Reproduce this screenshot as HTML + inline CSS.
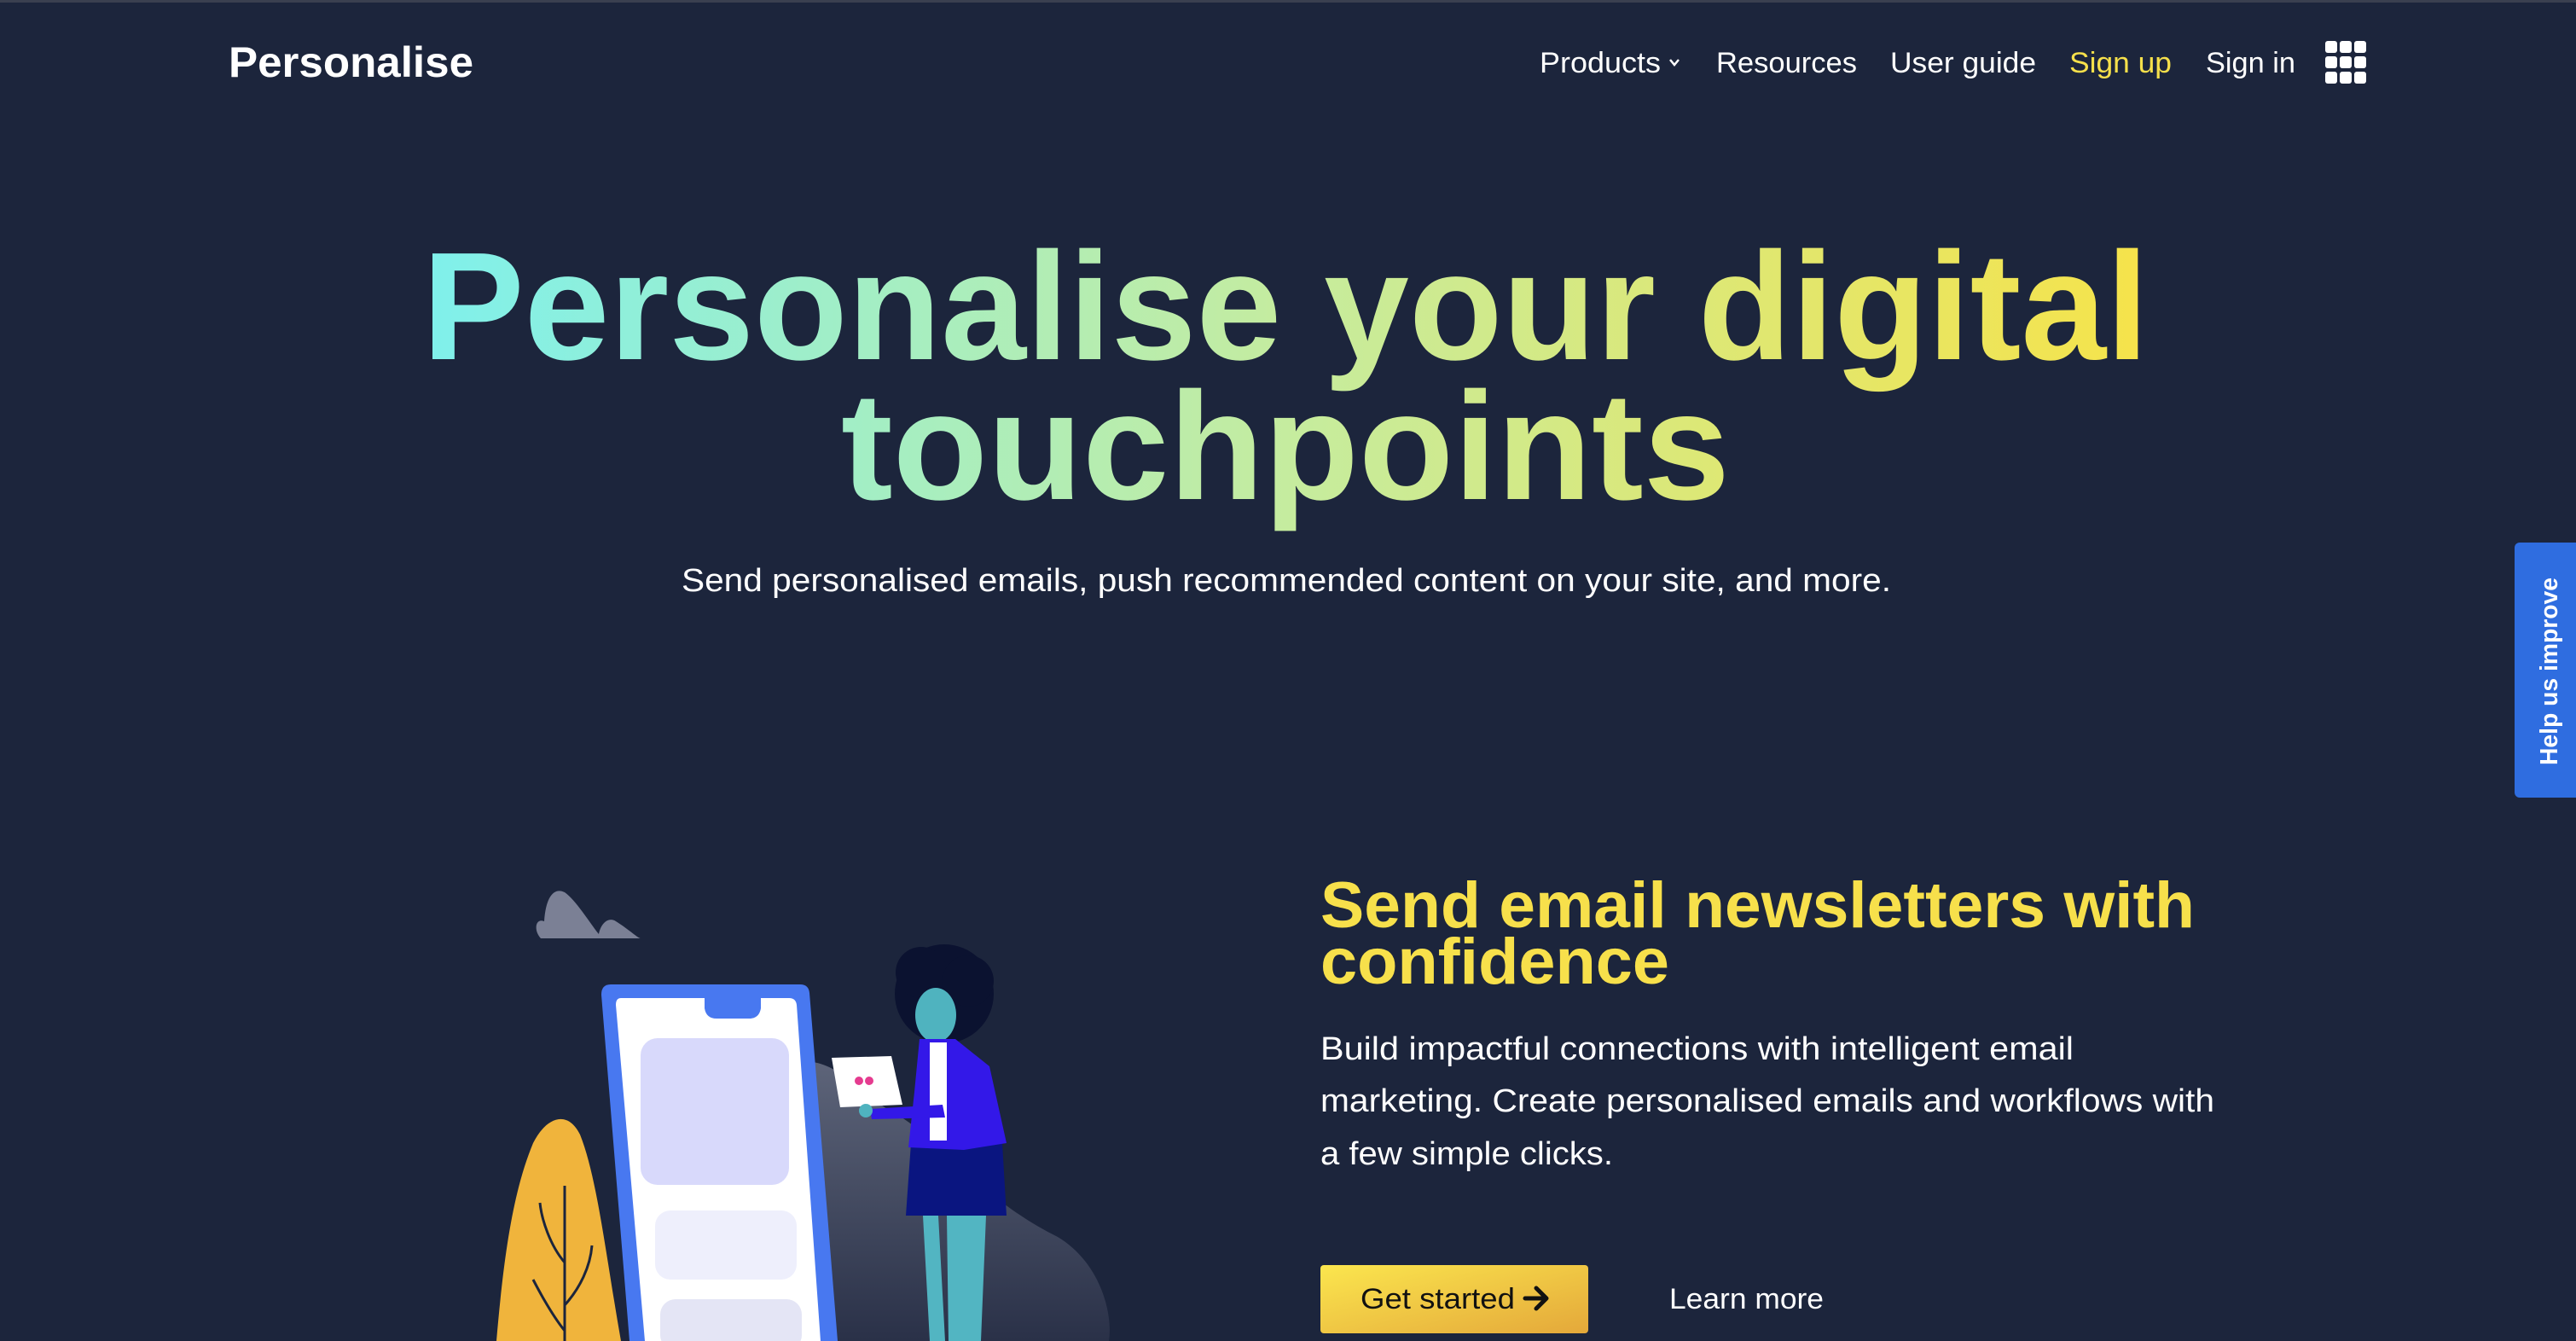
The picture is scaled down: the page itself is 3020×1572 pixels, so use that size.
<!DOCTYPE html>
<html><head><meta charset="utf-8"><style>
html,body{margin:0;padding:0;background:#1c253c;}
body{width:3020px;height:1572px;overflow:hidden;position:relative;font-family:"Liberation Sans",sans-serif;}
svg{position:absolute;left:0;top:0}
</style></head><body>
<svg width="3020" height="1572" viewBox="0 0 3020 1572" xmlns="http://www.w3.org/2000/svg" font-family="Liberation Sans, sans-serif">
<defs>
<linearGradient id="hg" x1="495" y1="0" x2="2519" y2="0" gradientUnits="userSpaceOnUse">
<stop offset="0" stop-color="#7ff0ec"/><stop offset="0.5" stop-color="#c5ec9f"/><stop offset="1" stop-color="#f6e34a"/></linearGradient>
<linearGradient id="bg" x1="0" y1="0" x2="1" y2="1"><stop offset="0" stop-color="#fbe64e"/><stop offset="1" stop-color="#e4a83a"/></linearGradient>
<linearGradient id="hill" x1="0" y1="0" x2="0" y2="1"><stop offset="0" stop-color="#5d6479"/><stop offset="1" stop-color="#2a3148"/></linearGradient>
</defs>
<rect width="3020" height="1572" fill="#1c253c"/>
<rect width="3020" height="3" fill="#3a4050"/>
<!-- logo -->
<text x="268" y="90" font-size="50" font-weight="bold" fill="#fff" textLength="287" lengthAdjust="spacingAndGlyphs">Personalise</text>
<!-- nav -->
<g font-size="34" fill="#fff">
<text x="1805" y="85" textLength="142" lengthAdjust="spacingAndGlyphs">Products</text>
<path d="M1958 70 l5 6 l5 -6" stroke="#fff" stroke-width="2.5" fill="none"/>
<text x="2012" y="85" textLength="165" lengthAdjust="spacingAndGlyphs">Resources</text>
<text x="2216" y="85" textLength="171" lengthAdjust="spacingAndGlyphs">User guide</text>
<text x="2426" y="85" fill="#f6e04b" textLength="120" lengthAdjust="spacingAndGlyphs">Sign up</text>
<text x="2586" y="85" textLength="105" lengthAdjust="spacingAndGlyphs">Sign in</text>
</g>
<g fill="#fff">
<rect x="2726" y="48" width="14" height="14" rx="3"/><rect x="2743" y="48" width="14" height="14" rx="3"/><rect x="2760" y="48" width="14" height="14" rx="3"/>
<rect x="2726" y="66" width="14" height="14" rx="3"/><rect x="2743" y="66" width="14" height="14" rx="3"/><rect x="2760" y="66" width="14" height="14" rx="3"/>
<rect x="2726" y="84" width="14" height="14" rx="3"/><rect x="2743" y="84" width="14" height="14" rx="3"/><rect x="2760" y="84" width="14" height="14" rx="3"/>
</g>
<!-- hero -->
<g font-size="180" font-weight="bold" fill="url(#hg)">
<text x="495" y="421" textLength="2024" lengthAdjust="spacingAndGlyphs">Personalise your digital</text>
<text x="986" y="585" textLength="1042" lengthAdjust="spacingAndGlyphs">touchpoints</text>
</g>
<text x="799" y="693" font-size="38" fill="#fff" textLength="1418" lengthAdjust="spacingAndGlyphs">Send personalised emails, push recommended content on your site, and more.</text>
<!-- section -->
<g font-size="76" font-weight="bold" fill="#f7e04b">
<text x="1548" y="1087" textLength="1025" lengthAdjust="spacingAndGlyphs">Send email newsletters with</text>
<text x="1548" y="1153" textLength="409" lengthAdjust="spacingAndGlyphs">confidence</text>
</g>
<g font-size="38" fill="#fff">
<text x="1548" y="1242" textLength="883" lengthAdjust="spacingAndGlyphs">Build impactful connections with intelligent email</text>
<text x="1548" y="1303" textLength="1048" lengthAdjust="spacingAndGlyphs">marketing. Create personalised emails and workflows with</text>
<text x="1548" y="1365" textLength="343" lengthAdjust="spacingAndGlyphs">a few simple clicks.</text>
</g>
<rect x="1548" y="1483" width="314" height="80" rx="4" fill="url(#bg)"/>
<text x="1595" y="1534" font-size="34" fill="#111" textLength="181" lengthAdjust="spacingAndGlyphs">Get started</text>
<path d="M1788 1522 h24 M1801 1510 l12 12 l-12 12" stroke="#111" stroke-width="5" fill="none" stroke-linecap="round" stroke-linejoin="round"/>
<text x="1957" y="1534" font-size="34" fill="#fff" textLength="181" lengthAdjust="spacingAndGlyphs">Learn more</text>
<!-- help tab -->
<rect x="2948" y="636" width="90" height="299" rx="6" fill="#2f6de0"/>
<text transform="translate(2998 897) rotate(-90)" font-size="29" font-weight="bold" fill="#fff" textLength="220" lengthAdjust="spacingAndGlyphs">Help us improve</text>
<!-- illustration -->
<path d="M634 1100 C625 1090 628 1076 638 1080 C640 1050 650 1040 662 1046 C675 1055 690 1080 702 1095 C705 1080 715 1075 722 1080 C738 1090 748 1100 751 1100 Z" fill="#7b8095"/>
<path d="M953 1245 C985 1250 1010 1280 1040 1300 C1100 1330 1140 1400 1240 1450 C1290 1480 1305 1540 1300 1572 L960 1572 Z" fill="url(#hill)"/>
<path d="M582 1572 C590 1480 600 1400 625 1340 C640 1310 665 1300 680 1330 C700 1380 710 1470 728 1572 Z" fill="#f0b43c"/>
<path d="M662 1390 V1572 M662 1480 C645 1460 635 1430 633 1410 M662 1530 C680 1510 692 1485 694 1460 M662 1560 C650 1545 638 1525 625 1500" stroke="#1c253c" stroke-width="3" fill="none"/>
<path d="M716 1154 L938 1154 Q948 1154 949 1164 L982 1572 L738 1572 L705 1166 Q705 1154 716 1154 Z" fill="#4878f0"/>
<path d="M728 1170 L826 1170 L826 1182 Q828 1194 840 1194 L878 1194 Q890 1194 892 1182 L892 1170 L925 1170 Q933 1170 934 1178 L962 1572 L756 1572 L722 1178 Q722 1170 728 1170 Z" fill="#fff"/>
<rect x="751" y="1217" width="174" height="172" rx="20" fill="#d8d9fb"/>
<rect x="768" y="1419" width="166" height="81" rx="18" fill="#eeeffc"/>
<rect x="774" y="1523" width="166" height="60" rx="18" fill="#e4e5f5"/>
<!-- woman -->
<circle cx="1107" cy="1165" r="58" fill="#0b1230"/>
<circle cx="1080" cy="1140" r="30" fill="#0b1230"/>
<circle cx="1135" cy="1150" r="30" fill="#0b1230"/>
<ellipse cx="1097" cy="1190" rx="24" ry="32" fill="#4fb3bf"/>
<rect x="1087" y="1210" width="18" height="20" fill="#4fb3bf"/>
<path d="M1082 1425 L1100 1425 L1108 1572 L1090 1572 Z M1110 1425 L1156 1425 L1150 1572 L1112 1572 Z" fill="#52b5c2"/>
<path d="M1068 1340 L1175 1340 L1180 1425 L1062 1425 Z" fill="#0a1580"/>
<path d="M1078 1218 L1120 1218 L1160 1250 L1180 1340 L1130 1348 L1065 1345 L1072 1280 Z" fill="#3318e8"/>
<rect x="1090" y="1222" width="20" height="115" fill="#fff"/>
<path d="M1020 1300 L1105 1295 L1108 1310 L1022 1312 Z" fill="#3318e8"/>
<path d="M975 1240 L1045 1238 L1058 1295 L985 1298 Z" fill="#fff"/>
<circle cx="1007" cy="1267" r="5" fill="#e53b8f"/><circle cx="1019" cy="1267" r="5" fill="#e53b8f"/>
<circle cx="1015" cy="1302" r="8" fill="#4fb3bf"/>
</svg>
</body></html>
